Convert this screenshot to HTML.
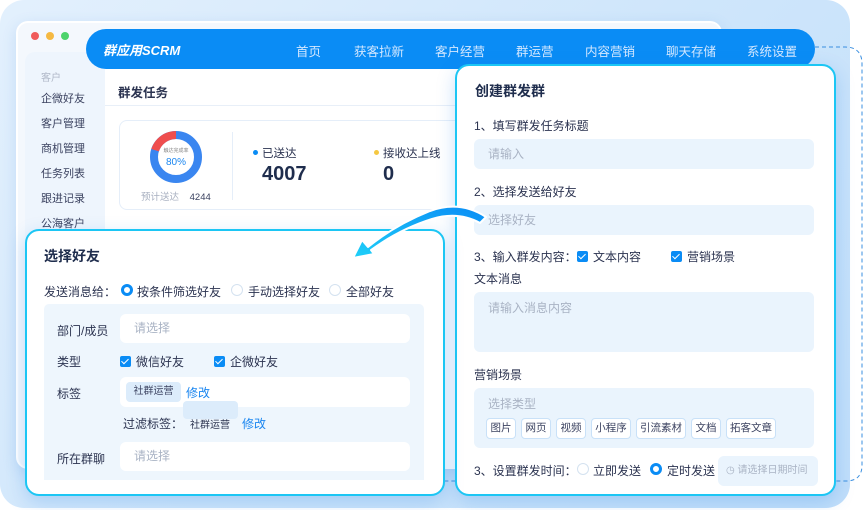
<!DOCTYPE html>
<html><head><meta charset="utf-8"><style>
*{margin:0;padding:0;box-sizing:border-box}
body{width:864px;height:510px;overflow:hidden;background:#fff;font-family:"Liberation Sans","Noto Sans CJK SC",sans-serif;color:#2b3350;position:relative}
.a{position:absolute}
.bg{left:0;top:0;width:850px;height:508px;border-radius:24px;background:linear-gradient(135deg,#e3f0fd 0%,#cfe6fb 50%,#c0defa 100%)}
.win{left:16px;top:21px;width:706px;height:448px;border-radius:12px;background:#f4f8fd;border:2px solid #fff;box-shadow:0 4px 14px rgba(90,150,220,.2)}
.dot{width:8px;height:8px;border-radius:50%;top:32px}
.nav{left:86px;top:29px;width:729px;height:40px;border-radius:20px;background:#0a8cf5}
.nav span{position:absolute;top:12px;font-size:12.5px;color:#d4e8ff}
.side{left:25px;top:52px;width:80px;height:410px;background:#eef5fd;border-radius:10px 0 0 0}
.side div{position:absolute;left:16px;font-size:11px;color:#3b4260}
.main{left:105px;top:69px;width:615px;height:398px;background:#fff}
.card{background:#fff;border:2px solid #1cc6f4;border-radius:14px;box-shadow:0 6px 18px rgba(40,130,230,.25)}
.t{font-size:12px;color:#2b3350;position:absolute;white-space:nowrap}
.in{position:absolute;background:#eaf4fd;border-radius:6px;font-size:12px;color:#a9b3c4;padding-left:14px}
.tag{position:absolute;top:418px;height:21px;border:1px solid #c9e1f8;background:#fff;border-radius:4px;font-size:10.5px;color:#3b4260;text-align:center;line-height:19px}
.cb{display:inline-block;width:11px;height:11px;background:#0a8cf5;border-radius:2px;position:absolute}
.cb:after{content:"";position:absolute;left:3px;top:1px;width:3px;height:6px;border:solid #fff;border-width:0 1.6px 1.6px 0;transform:rotate(45deg)}
.rd{position:absolute;width:12px;height:12px;border-radius:50%;border:1px solid #d4e2f0;background:#fff}
.rd.on{border:3.5px solid #0a8cf5}
.wi{position:absolute;background:#fff;border-radius:6px;font-size:12px;color:#a9b3c4;padding-left:14px}
</style></head><body>
<div class="a bg"></div>
<svg class="a" style="left:0;top:0" width="864" height="510"><path d="M815 47 H845 Q862 47 862 64 V465 Q862 481 846 481 H445" fill="none" stroke="#3a8fe0" stroke-width="1" stroke-dasharray="4 3"/></svg>
<div class="a win"></div>
<div class="a dot" style="left:31px;background:#f05b5b"></div>
<div class="a dot" style="left:46px;background:#f5b942"></div>
<div class="a dot" style="left:61px;background:#4cd36b"></div>
<div class="a side">
<div style="top:17px;color:#b0b8c8;font-size:10px">客户</div>
<div style="top:38px">企微好友</div><div style="top:63px">客户管理</div><div style="top:88px">商机管理</div><div style="top:113px">任务列表</div><div style="top:138px">跟进记录</div><div style="top:163px">公海客户</div>
</div>
<div class="a main">
<div class="t" style="left:13px;top:13px;font-weight:bold;font-size:12.5px">群发任务</div>
<div class="a" style="left:0;top:36px;width:615px;height:1px;background:#e8eff8"></div>
<div class="a" style="left:14px;top:51px;width:360px;height:90px;border:1px solid #e5eef9;border-radius:8px"></div>
<svg class="a" style="left:45px;top:62px" width="52" height="52"><circle cx="26" cy="26" r="22" fill="none" stroke="#3a86f0" stroke-width="8"/><path d="M26 4 A22 22 0 0 0 5.1 19.2" fill="none" stroke="#ef4e4e" stroke-width="8"/><text x="26" y="21" font-size="5" fill="#888" text-anchor="middle">触达完成率</text><text x="26" y="34" font-size="10" fill="#1a86f0" text-anchor="middle">80%</text></svg>
<div class="t" style="left:36px;top:120px;font-size:9.5px;color:#a8b0c0">预计送达 <span style="color:#3b4260;margin-left:8px">4244</span></div>
<div class="a" style="left:127px;top:63px;width:1px;height:68px;background:#e5eef9"></div>
<div class="a" style="left:148px;top:81px;width:5px;height:5px;border-radius:50%;background:#0a8cf5"></div>
<div class="t" style="left:157px;top:76px;font-size:11.5px">已送达</div>
<div class="t" style="left:157px;top:94px;font-size:20px;font-weight:bold;color:#1f2d4d">4007</div>
<div class="a" style="left:269px;top:81px;width:5px;height:5px;border-radius:50%;background:#f5c842"></div>
<div class="t" style="left:278px;top:76px;font-size:11.5px">接收达上线</div>
<div class="t" style="left:278px;top:94px;font-size:20px;font-weight:bold;color:#1f2d4d">0</div>
</div>
<div class="a nav">
<div class="t" style="left:17px;top:11px;color:#fff;font-size:13px;font-weight:bold;font-style:italic">群应用SCRM</div>
<span style="left:210px">首页</span><span style="left:268px">获客拉新</span><span style="left:349px">客户经营</span><span style="left:430px">群运营</span><span style="left:499px">内容营销</span><span style="left:580px">聊天存储</span><span style="left:661px">系统设置</span>
</div>

<div class="a card" style="left:455px;top:64px;width:381px;height:432px"></div>
<div class="t" style="left:475px;top:81px;font-size:14px;font-weight:bold;color:#1f2d4d">创建群发群</div>
<div class="t" style="left:474px;top:117px">1、填写群发任务标题</div>
<div class="in" style="left:474px;top:139px;width:340px;height:30px;line-height:30px">请输入</div>
<div class="t" style="left:474px;top:183px">2、选择发送给好友</div>
<div class="in" style="left:474px;top:205px;width:340px;height:30px;line-height:30px">选择好友</div>
<div class="t" style="left:474px;top:248px">3、输入群发内容：</div>
<span class="cb" style="left:577px;top:251px"></span><div class="t" style="left:593px;top:248px">文本内容</div>
<span class="cb" style="left:671px;top:251px"></span><div class="t" style="left:687px;top:248px">营销场景</div>
<div class="t" style="left:474px;top:270px">文本消息</div>
<div class="in" style="left:474px;top:292px;width:340px;height:60px;padding-top:7px">请输入消息内容</div>
<div class="t" style="left:474px;top:366px">营销场景</div>
<div class="in" style="left:474px;top:388px;width:340px;height:60px;padding-top:7px">选择类型</div>
<div class="tag" style="left:486px;width:30px">图片</div><div class="tag" style="left:521px;width:30px">网页</div><div class="tag" style="left:556px;width:30px">视频</div><div class="tag" style="left:591px;width:40px">小程序</div><div class="tag" style="left:636px;width:50px">引流素材</div><div class="tag" style="left:691px;width:30px">文档</div><div class="tag" style="left:726px;width:50px">拓客文章</div>
<div class="t" style="left:474px;top:462px">3、设置群发时间：</div>
<span class="rd" style="left:577px;top:463px"></span><div class="t" style="left:593px;top:462px">立即发送</div>
<span class="rd on" style="left:650px;top:463px"></span><div class="t" style="left:667px;top:462px">定时发送</div>
<div class="in" style="left:718px;top:456px;width:100px;height:30px;line-height:30px;font-size:10px;padding-left:8px">◷ 请选择日期时间</div>

<div class="a card" style="left:25px;top:229px;width:420px;height:267px"></div>
<div class="t" style="left:44px;top:246px;font-size:14px;font-weight:bold;color:#1f2d4d">选择好友</div>
<div class="t" style="left:44px;top:283px">发送消息给：</div>
<span class="rd on" style="left:121px;top:284px"></span><div class="t" style="left:137px;top:283px">按条件筛选好友</div>
<span class="rd" style="left:231px;top:284px"></span><div class="t" style="left:248px;top:283px">手动选择好友</div>
<span class="rd" style="left:329px;top:284px"></span><div class="t" style="left:346px;top:283px">全部好友</div>
<div class="a" style="left:44px;top:304px;width:380px;height:176px;background:#eef6fd;border-radius:5px 5px 0 0"></div>
<div class="t" style="left:57px;top:322px">部门/成员</div>
<div class="wi" style="left:120px;top:314px;width:290px;height:29px;line-height:29px">请选择</div>
<div class="t" style="left:57px;top:353px">类型</div>
<span class="cb" style="left:120px;top:356px"></span><div class="t" style="left:136px;top:353px">微信好友</div>
<span class="cb" style="left:214px;top:356px"></span><div class="t" style="left:230px;top:353px">企微好友</div>
<div class="t" style="left:57px;top:385px">标签</div>
<div class="wi" style="left:120px;top:377px;width:290px;height:30px"></div>
<div class="a" style="left:126px;top:382px;width:55px;height:20px;background:#dcecfb;border-radius:4px;font-size:10px;line-height:20px;text-align:center;color:#3b4260">社群运营</div>
<div class="t" style="left:186px;top:384px;color:#1a86f0">修改</div>
<div class="a" style="left:183px;top:401px;width:55px;height:18px;background:#dcecfb;border-radius:4px"></div>
<div class="t" style="left:123px;top:415px">过滤标签：</div>
<div class="t" style="left:190px;top:416px;font-size:10px">社群运营</div>
<div class="t" style="left:242px;top:415px;color:#1a86f0">修改</div>
<div class="t" style="left:57px;top:450px">所在群聊</div>
<div class="wi" style="left:120px;top:442px;width:290px;height:29px;line-height:29px">请选择</div>

<svg class="a" style="left:340px;top:195px" width="160" height="75"><defs><linearGradient id="g" x1="1" y1="0" x2="0" y2="1"><stop offset="0" stop-color="#0a8cf5"/><stop offset="1" stop-color="#1fd0f8"/></linearGradient></defs><path d="M146 22 Q120 5 90 16 Q55 30 28 52 L22 45 L13 63 L34 59 L31 55 Q60 34 92 24 Q118 16 140 28 Z" fill="url(#g)" stroke="#fff" stroke-width="2" stroke-linejoin="round"/></svg>
</body></html>
